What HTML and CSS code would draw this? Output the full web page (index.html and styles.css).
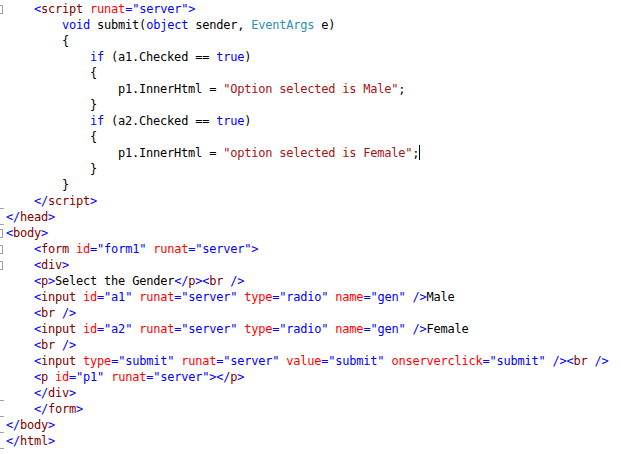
FILE: index.html
```html
<!DOCTYPE html>
<html>
<head>
<meta charset="utf-8">
<link rel="stylesheet" href="styles.css">
</head>
<body>
<div class="editor">
<div class="ln"><span class="gut"><span class="box"></span></span><span class="code">    <span class="b">&lt;</span><span class="t">script</span> <span class="a">runat</span><span class="b">="server"&gt;</span></span></div>
<div class="ln"><span class="gut"></span><span class="code">        <span class="b">void</span> submit(<span class="b">object</span> sender, <span class="ty">EventArgs</span> e)</span></div>
<div class="ln"><span class="gut"></span><span class="code">        {</span></div>
<div class="ln"><span class="gut"></span><span class="code">            <span class="b">if</span> (a1.Checked == <span class="b">true</span>)</span></div>
<div class="ln"><span class="gut"></span><span class="code">            {</span></div>
<div class="ln"><span class="gut"></span><span class="code">                p1.InnerHtml = <span class="s">"Option selected is Male"</span>;</span></div>
<div class="ln"><span class="gut"></span><span class="code">            }</span></div>
<div class="ln"><span class="gut"></span><span class="code">            <span class="b">if</span> (a2.Checked == <span class="b">true</span>)</span></div>
<div class="ln"><span class="gut"></span><span class="code">            {</span></div>
<div class="ln"><span class="gut"></span><span class="code">                p1.InnerHtml = <span class="s">"option selected is Female"</span>;<span class="caret"></span></span></div>
<div class="ln"><span class="gut"></span><span class="code">            }</span></div>
<div class="ln"><span class="gut"></span><span class="code">        }</span></div>
<div class="ln"><span class="gut"><span class="tick"></span></span><span class="code">    <span class="b">&lt;/</span><span class="t">script</span><span class="b">&gt;</span></span></div>
<div class="ln"><span class="gut"><span class="tick"></span></span><span class="code"><span class="b">&lt;/</span><span class="t">head</span><span class="b">&gt;</span></span></div>
<div class="ln"><span class="gut"><span class="box"></span></span><span class="code"><span class="b">&lt;</span><span class="t">body</span><span class="b">&gt;</span></span></div>
<div class="ln"><span class="gut"><span class="box"></span></span><span class="code">    <span class="b">&lt;</span><span class="t">form</span> <span class="a">id</span><span class="b">="form1"</span> <span class="a">runat</span><span class="b">="server"&gt;</span></span></div>
<div class="ln"><span class="gut"><span class="box"></span></span><span class="code">    <span class="b">&lt;</span><span class="t">div</span><span class="b">&gt;</span></span></div>
<div class="ln"><span class="gut"></span><span class="code">    <span class="b">&lt;</span><span class="t">p</span><span class="b">&gt;</span>Select the Gender<span class="b">&lt;/</span><span class="t">p</span><span class="b">&gt;&lt;</span><span class="t">br</span> <span class="b">/&gt;</span></span></div>
<div class="ln"><span class="gut"></span><span class="code">    <span class="b">&lt;</span><span class="t">input</span> <span class="a">id</span><span class="b">="a1"</span> <span class="a">runat</span><span class="b">="server"</span> <span class="a">type</span><span class="b">="radio"</span> <span class="a">name</span><span class="b">="gen"</span> <span class="b">/&gt;</span>Male</span></div>
<div class="ln"><span class="gut"></span><span class="code">    <span class="b">&lt;</span><span class="t">br</span> <span class="b">/&gt;</span></span></div>
<div class="ln"><span class="gut"></span><span class="code">    <span class="b">&lt;</span><span class="t">input</span> <span class="a">id</span><span class="b">="a2"</span> <span class="a">runat</span><span class="b">="server"</span> <span class="a">type</span><span class="b">="radio"</span> <span class="a">name</span><span class="b">="gen"</span> <span class="b">/&gt;</span>Female</span></div>
<div class="ln"><span class="gut"></span><span class="code">    <span class="b">&lt;</span><span class="t">br</span> <span class="b">/&gt;</span></span></div>
<div class="ln"><span class="gut"></span><span class="code">    <span class="b">&lt;</span><span class="t">input</span> <span class="a">type</span><span class="b">="submit"</span> <span class="a">runat</span><span class="b">="server"</span> <span class="a">value</span><span class="b">="submit"</span> <span class="a">onserverclick</span><span class="b">="submit"</span> <span class="b">/&gt;&lt;</span><span class="t">br</span> <span class="b">/&gt;</span></span></div>
<div class="ln"><span class="gut"></span><span class="code">    <span class="b">&lt;</span><span class="t">p</span> <span class="a">id</span><span class="b">="p1"</span> <span class="a">runat</span><span class="b">="server"&gt;&lt;/</span><span class="t">p</span><span class="b">&gt;</span></span></div>
<div class="ln"><span class="gut"><span class="tick"></span></span><span class="code">    <span class="b">&lt;/</span><span class="t">div</span><span class="b">&gt;</span></span></div>
<div class="ln"><span class="gut"><span class="tick"></span></span><span class="code">    <span class="b">&lt;/</span><span class="t">form</span><span class="b">&gt;</span></span></div>
<div class="ln"><span class="gut"><span class="tick"></span></span><span class="code"><span class="b">&lt;/</span><span class="t">body</span><span class="b">&gt;</span></span></div>
<div class="ln"><span class="gut"><span class="tick"></span></span><span class="code"><span class="b">&lt;/</span><span class="t">html</span><span class="b">&gt;</span></span></div>
</div>
</body>
</html>
```
FILE: styles.css
```css
html, body {
  margin: 0;
  padding: 0;
  background: #ffffff;
}
.editor {
  padding-top: 1px;
  font-family: "DejaVu Sans Mono", "Liberation Mono", monospace;
  font-size: 12px;
  letter-spacing: -0.22px;
  color: #000000;
}
.ln {
  display: flex;
  height: 16px;
  line-height: 16px;
}
.gut {
  position: relative;
  flex: 0 0 6px;
  width: 6px;
  overflow: hidden;
}
.code {
  white-space: pre;
}
.box {
  position: absolute;
  left: -6px;
  top: 4px;
  width: 9px;
  height: 9px;
  border: 1px solid #a0a0a0;
  box-sizing: border-box;
  background: #ffffff;
}
.tick {
  position: absolute;
  left: 0;
  bottom: 0;
  width: 4px;
  height: 1px;
  background: #a0a0a0;
}
.caret {
  display: inline-block;
  width: 1px;
  height: 15px;
  background: #000000;
  vertical-align: -3px;
}
.b { color: #0000ff; }
.t { color: #800000; }
.a { color: #ff0000; }
.s { color: #a31515; }
.ty { color: #2b91af; }
```
